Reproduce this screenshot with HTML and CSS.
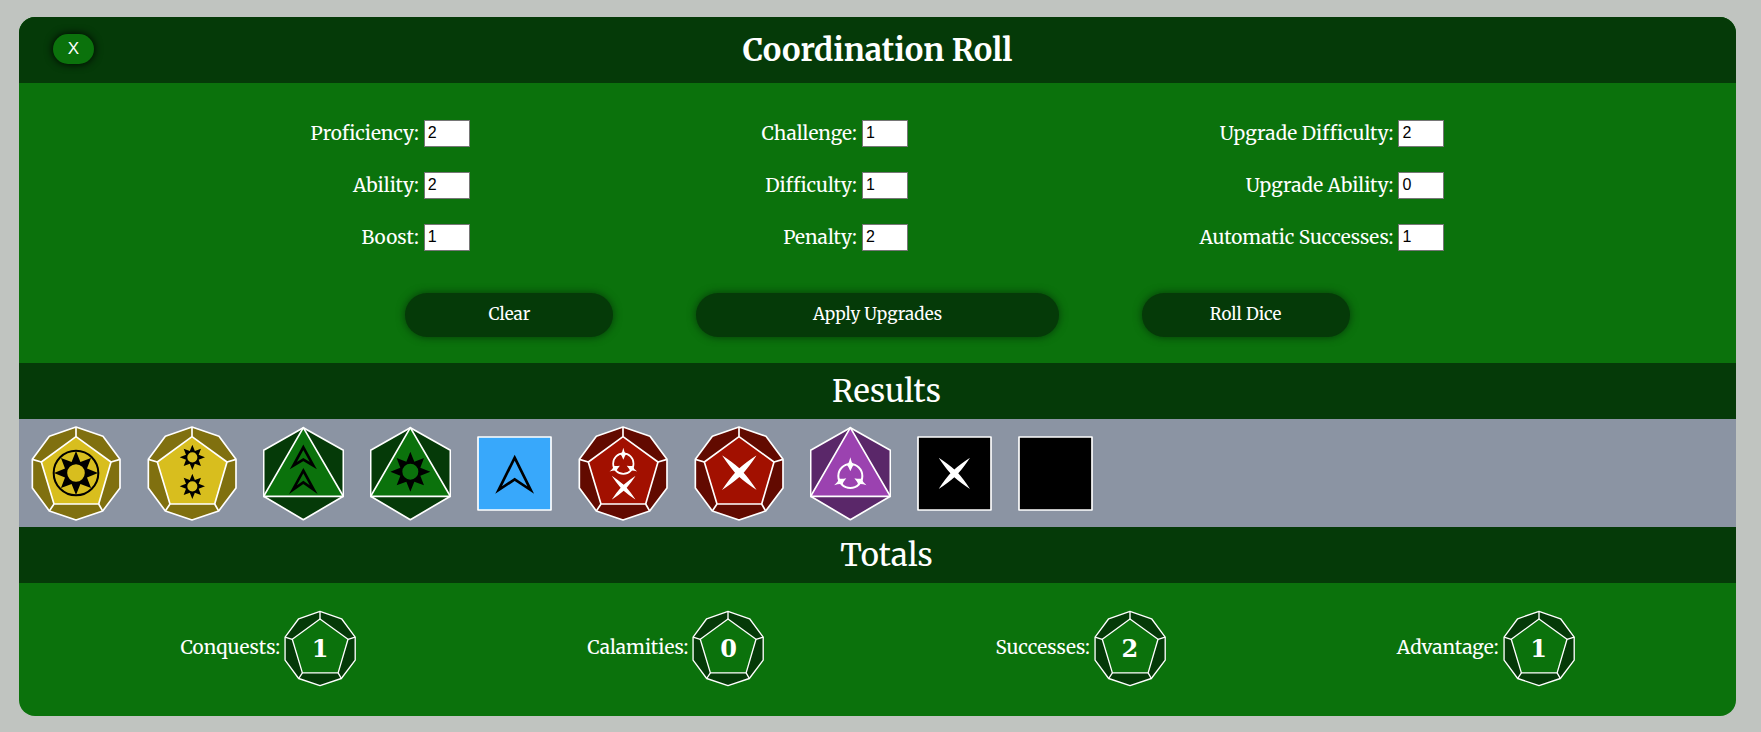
FILE: index.html
```html
<!DOCTYPE html>
<html lang="en">
<head>
<meta charset="utf-8">
<title>Coordination Roll</title>
<link rel="stylesheet" href="styles.css">
</head>
<body>
<svg class="sprites" aria-hidden="true">
  <symbol id="d12" viewBox="34 31 270 285">
    <path class="die-edge" d="M169 34 250 62 301 131V217L249 286 169 313 89 286 38 217V131L89 62Z"/>
    <path class="die-face" d="M169 63 274 139 237 265H103L65 139Z"/>
    <path class="die-line" d="M169 34V63M301 131 274 139M249 286 237 265M89 286 103 265M38 131 65 139"/>
  </symbol>
  <symbol id="d8" viewBox="39 31 243 285">
    <path class="die-edge" d="M160 36 280 104V242L160 312 41 242V104Z"/>
    <path class="die-face" d="M160 36 280 242H41Z"/>
  </symbol>
  <symbol id="d6" viewBox="0 0 225 225">
    <path class="die-face" d="M3 3H222V222H3Z"/>
  </symbol>
  <symbol id="sun" viewBox="-60 -60 120 120">
    <path fill-rule="evenodd" d="M0-60 12-30 41-41 30-12 60 0 30 12 41 41 12 30 0 60-12 30-41 41-30 12-60 0-30-12-41-41-12-30ZM0-24A24 24 0 1 0 0 24 24 24 0 1 0 0-24Z"/>
  </symbol>
  <symbol id="arrow" viewBox="-62 -62 124 124">
    <path fill="none" stroke="#000" stroke-width="8" stroke-miterlimit="8" d="M0-47 48 50 0 18-48 50Z"/>
  </symbol>
  <symbol id="cross" viewBox="-52 -52 104 104">
    <path fill="#fff" d="M-52-52Q-20-31 0-13 20-31 52-52 31-20 13 0 31 20 52 52 20 31 0 13-20 31-52 52-31 20-13 0-31-20-52-52Z"/>
  </symbol>
  <symbol id="threat" viewBox="-60 -60 120 120">
    <circle r="36" fill="none" stroke="#fff" stroke-width="6"/>
    <g fill="#fff">
      <path id="spike" d="M0-56Q3-40 10-33 5-28 0-14-5-28-10-33-3-40 0-56Z"/>
      <use href="#spike" transform="rotate(120)"/>
      <use href="#spike" transform="rotate(240)"/>
    </g>
  </symbol>
</svg>

<main class="panel">
  <header class="panel-header">
    <button class="close" type="button" aria-label="Close">X</button>
    <h1 class="title">Coordination Roll</h1>
  </header>

  <form class="pool">
    <div class="fields">
      <div class="column">
        <label for="proficiency">Proficiency:</label><input id="proficiency" type="text" inputmode="numeric" value="2">
        <label for="ability">Ability:</label><input id="ability" type="text" inputmode="numeric" value="2">
        <label for="boost">Boost:</label><input id="boost" type="text" inputmode="numeric" value="1">
      </div>
      <div class="column">
        <label for="challenge">Challenge:</label><input id="challenge" type="text" inputmode="numeric" value="1">
        <label for="difficulty">Difficulty:</label><input id="difficulty" type="text" inputmode="numeric" value="1">
        <label for="penalty">Penalty:</label><input id="penalty" type="text" inputmode="numeric" value="2">
      </div>
      <div class="column">
        <label for="up-difficulty">Upgrade Difficulty:</label><input id="up-difficulty" type="text" inputmode="numeric" value="2">
        <label for="up-ability">Upgrade Ability:</label><input id="up-ability" type="text" inputmode="numeric" value="0">
        <label for="auto">Automatic Successes:</label><input id="auto" type="text" inputmode="numeric" value="1">
      </div>
    </div>
    <div class="actions">
      <button class="action" type="button">Clear</button>
      <button class="action" type="button">Apply Upgrades</button>
      <button class="action" type="button">Roll Dice</button>
    </div>
  </form>

  <h2 class="section-title">Results</h2>
  <div class="dice">
    <svg class="die die-12 gold" viewBox="34 31 270 285"><use href="#d12" x="34" y="31" width="270" height="285"/><circle cx="169" cy="172" r="67" fill="none" stroke="#000" stroke-width="6"/><use href="#sun" x="103" y="106" width="132" height="132"/></svg>
    <svg class="die die-12 gold" viewBox="34 31 270 285"><use href="#d12" x="34" y="31" width="270" height="285"/><use href="#sun" x="132" y="87" width="76" height="76"/><use href="#sun" x="132" y="174" width="76" height="76"/></svg>
    <svg class="die die-8 green" viewBox="39 31 243 285"><use href="#d8" x="39" y="31" width="243" height="285"/><g fill="none" stroke="#000" stroke-width="8" stroke-miterlimit="8"><path d="M160 95 190 150 160 132 130 150Z"/><path d="M160 165 191 222 160 200 129 222Z"/></g></svg>
    <svg class="die die-8 green" viewBox="39 31 243 285"><use href="#d8" x="39" y="31" width="243" height="285"/><use href="#sun" x="100" y="108" width="120" height="120"/></svg>
    <svg class="die die-6 blue" viewBox="0 0 225 225"><use href="#d6" width="225" height="225"/><use href="#arrow" x="51" y="50" width="124" height="124"/></svg>
    <svg class="die die-12 red" viewBox="34 31 270 285"><use href="#d12" x="34" y="31" width="270" height="285"/><use href="#threat" x="119" y="93" width="102" height="102"/><use href="#cross" x="135" y="180" width="72" height="72"/></svg>
    <svg class="die die-12 red" viewBox="34 31 270 285"><use href="#d12" x="34" y="31" width="270" height="285"/><use href="#cross" x="118" y="119" width="104" height="104"/></svg>
    <svg class="die die-8 purple" viewBox="39 31 243 285"><use href="#d8" x="39" y="31" width="243" height="285"/><use href="#threat" x="100" y="121" width="120" height="120"/></svg>
    <svg class="die die-6 black" viewBox="0 0 225 225"><use href="#d6" width="225" height="225"/><use href="#cross" x="65" y="65" width="94" height="94"/></svg>
    <svg class="die die-6 black" viewBox="0 0 225 225"><use href="#d6" width="225" height="225"/></svg>
  </div>

  <h2 class="section-title">Totals</h2>
  <div class="totals">
    <div class="total"><span class="total-name">Conquests:</span><div class="badge"><svg class="badge-die green"><use href="#d12"/></svg><span class="count">1</span></div></div>
    <div class="total"><span class="total-name">Calamities:</span><div class="badge"><svg class="badge-die green"><use href="#d12"/></svg><span class="count">0</span></div></div>
    <div class="total"><span class="total-name">Successes:</span><div class="badge"><svg class="badge-die green"><use href="#d12"/></svg><span class="count">2</span></div></div>
    <div class="total"><span class="total-name">Advantage:</span><div class="badge"><svg class="badge-die green"><use href="#d12"/></svg><span class="count">1</span></div></div>
  </div>
</main>
</body>
</html>
```
FILE: styles.css
```css
* { box-sizing: border-box; }

body {
  margin: 0;
  padding: 17px 25px 16px 19px;
  background: #c0c4c0;
  color: #fff;
  font-family: Merriweather, "DejaVu Serif Condensed", "DejaVu Serif", serif;
  font-size: 19px;
}

.sprites { display: none; }

.panel {
  overflow: hidden;
  border-radius: 16px;
  background: #0b720c;
}

.panel-header {
  display: grid;
  grid-template-columns: 1fr auto 1fr;
  align-items: center;
  height: 66px;
  padding: 0 34px;
  background: #053a08;
}

.close {
  justify-self: start;
  width: 41px;
  height: 30px;
  margin-bottom: 2px;
  padding: 0;
  border: 0;
  border-radius: 15px;
  background: #0b720c;
  box-shadow: 0 0 8px #000;
  color: #fff;
  font: 17px "Liberation Sans", Arial, sans-serif;
}

.title {
  margin: 0;
  font-size: 31px;
  line-height: 40px;
}

.pool { padding: 37px 0 26px; }

.fields {
  display: flex;
  justify-content: space-evenly;
}

.column {
  display: grid;
  grid-template-columns: auto 46px;
  gap: 25px 5px;
  align-items: center;
  text-align: right;
}

.column label { line-height: 27px; }

.column input {
  width: 46px;
  height: 27px;
  padding: 0 3px 2px;
  border: 1px solid #767676;
  background: #fff;
  color: #000;
  font: 16px "Liberation Sans", Arial, sans-serif;
}

.actions {
  display: grid;
  grid-template-columns: 208fr 362fr 208fr;
  gap: 83px;
  width: 55%;
  margin: 42px auto 0;
}

.action {
  height: 44px;
  padding: 0 0 2px;
  border: 0;
  border-radius: 22px;
  background: #053a08;
  box-shadow: 0 0 8px #053a08;
  color: #fff;
  font-family: inherit;
  font-size: 17px;
}

.section-title {
  margin: 0;
  padding-left: 18px;
  background: #053a08;
  font-size: 31px;
  font-weight: 400;
  line-height: 56px;
  text-align: center;
}

.dice {
  display: flex;
  flex-wrap: wrap;
  align-items: center;
  gap: 26px;
  padding: 7px 12px 6px;
  background: #8b94a3;
}

.die-edge, .die-face, .die-line {
  stroke: #fff;
  stroke-width: 5px;
  stroke-linejoin: round;
}
.die-edge { fill: var(--edge); }
.die-face { fill: var(--face); }

.die-12 { width: 90px; height: 95px; }
.die-8 { width: 81px; height: 95px; }
.die-6 { width: 75px; height: 75px; }

.gold { --face: #d8be1e; --edge: #80700f; }
.green { --face: #0b720c; --edge: #053a08; }
.blue { --face: #38a8fb; }
.red { --face: #a21000; --edge: #620a00; }
.purple { --face: #9b42b0; --edge: #5a2769; }
.black { --face: #000; }

.totals {
  display: flex;
  justify-content: space-around;
  padding: 27px 46px 29px;
}

.total {
  display: flex;
  align-items: center;
  gap: 4px;
}

.total-name { padding-bottom: 4px; }

.badge {
  display: grid;
  place-items: center;
}

.badge > * { grid-area: 1 / 1; }

.badge-die { width: 72px; height: 77px; }

.count {
  font-family: "DejaVu Serif", serif;
  font-size: 24px;
  font-weight: 700;
  line-height: 36px;
}
```
